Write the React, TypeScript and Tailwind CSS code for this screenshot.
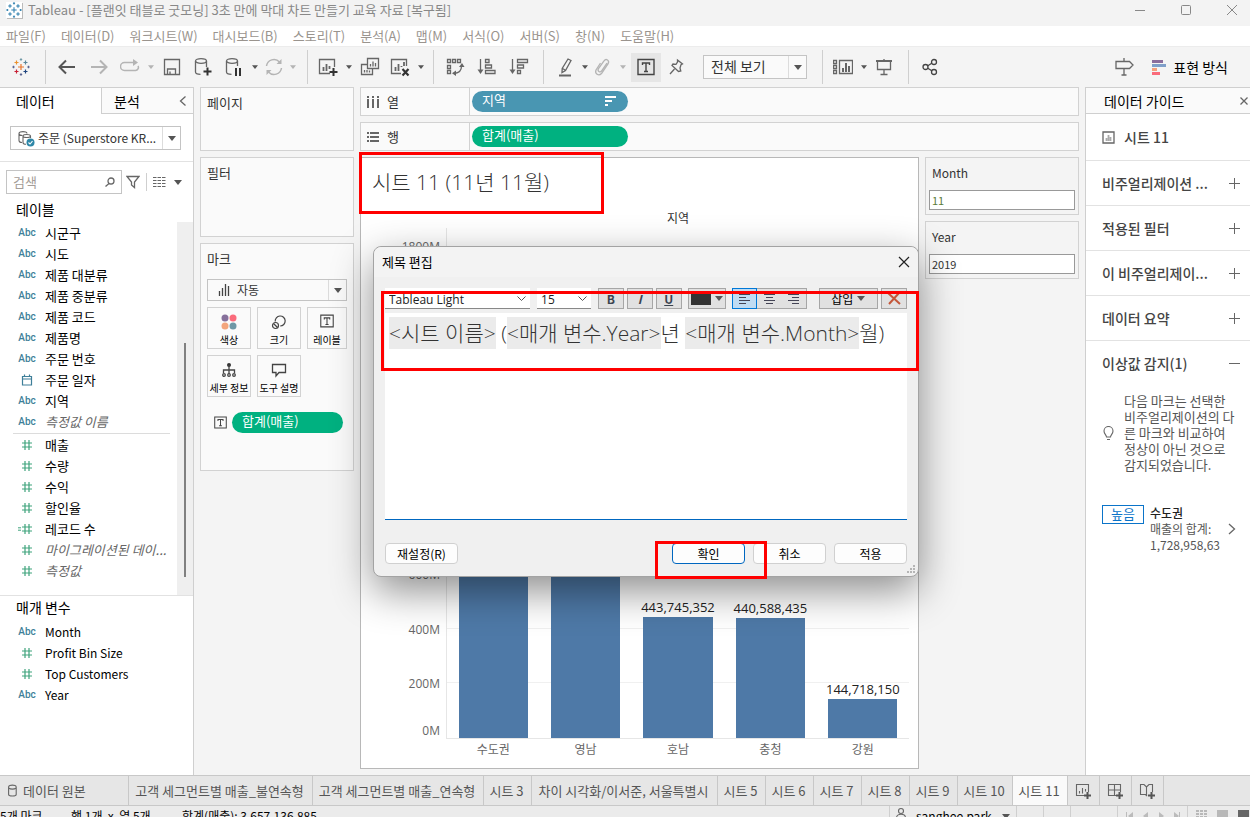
import React, { useState } from "react";

const BLUE = "#4e79a7";

/* ---------- small shared bits ---------- */

function Caret({ light = false, big = false }: { light?: boolean; big?: boolean }) {
  return (
    <svg width={big ? 8 : 6} height={big ? 5 : 4} viewBox="0 0 8 5" className="shrink-0">
      <path d="M0 0h8L4 5z" fill={light ? "#b4b4b4" : "#555"} />
    </svg>
  );
}

function Svg({
  w = 20,
  h = 20,
  color = "#666",
  sw = 1.3,
  children,
}: {
  w?: number;
  h?: number;
  color?: string;
  sw?: number;
  children: React.ReactNode;
}) {
  return (
    <svg
      width={w}
      height={h}
      viewBox={`0 0 ${w} ${h}`}
      fill="none"
      stroke={color}
      strokeWidth={sw}
      className="shrink-0"
    >
      {children}
    </svg>
  );
}

function TableauMark({ mono = false }: { mono?: boolean }) {
  const c = (color: string) => (mono ? "#2e7fae" : color);
  const cross = (x: number, y: number, r: number, color: string) => (
    <path key={`${x}-${y}`} d={`M${x - r} ${y}h${r * 2}M${x} ${y - r}v${r * 2}`} stroke={c(color)} />
  );
  return (
    <svg width={mono ? 16 : 18} height={mono ? 16 : 18} viewBox="0 0 18 18" fill="none" strokeWidth="1.2">
      {cross(9, 9, 3, "#e8762d")}
      {cross(4.5, 4.5, 2, "#eb912c")}
      {cross(13.5, 4.5, 2, "#59879b")}
      {cross(4.5, 13.5, 2, "#c72035")}
      {cross(13.5, 13.5, 2, "#1f447e")}
      {cross(9, 1.5, 1.2, "#7099a6")}
      {cross(9, 16.5, 1.2, "#5b6591")}
      {cross(1.5, 9, 1.2, "#5b6591")}
      {cross(16.5, 9, 1.2, "#5b6591")}
    </svg>
  );
}

function TextIcon({ size = 18 }: { size?: number }) {
  return (
    <svg width={size} height={size} viewBox="0 0 18 18" fill="none" stroke="#444" strokeWidth="1.4" className="shrink-0">
      <path d="M1 1.500h16v15H1zM5.500 7V5h7v2M9 5v8.500M7 13.500h4" />
    </svg>
  );
}

function ToolButton({
  label,
  className = "w-8",
  children,
}: {
  label: string;
  className?: string;
  children: React.ReactNode;
}) {
  return (
    <button aria-label={label} className={`flex h-[29px] shrink-0 items-center justify-center ${className}`}>
      {children}
    </button>
  );
}

function ToolCaret({ label, light = false }: { label: string; light?: boolean }) {
  return (
    <button aria-label={label} className="flex h-[29px] w-3 shrink-0 items-center justify-center">
      <Caret light={light} />
    </button>
  );
}

function Sep({ className = "ml-2" }: { className?: string }) {
  return <span className={`mr-[5px] h-[34px] w-px shrink-0 bg-[#cfcfcf] ${className}`} />;
}

/* ---------- window chrome ---------- */

const menus = [
  "파일(F)",
  "데이터(D)",
  "워크시트(W)",
  "대시보드(B)",
  "스토리(T)",
  "분석(A)",
  "맵(M)",
  "서식(O)",
  "서버(S)",
  "창(N)",
  "도움말(H)",
];

function TitleBar() {
  return (
    <header className="flex h-[26px] shrink-0 items-start bg-[#f3f3f3] pl-1.5">
      <span className="mt-0.5 mr-1.5 flex h-4 w-4 items-center justify-center bg-white shadow-[1px_1px_0_#bbb]">
        <TableauMark mono />
      </span>
      <h1 className="text-[13px] leading-5 text-[#888]">
        Tableau - [플랜잇 태블로 굿모닝] 3초 만에 막대 차트 만들기 교육 자료 [복구됨]
      </h1>
      <div className="ml-auto flex h-5 items-center gap-2.5">
        <button aria-label="최소화" className="flex w-9 justify-center">
          <Svg w={12} h={12} color="#888" sw={1}><path d="M1 6.500h10" /></Svg>
        </button>
        <button aria-label="최대화" className="flex w-9 justify-center">
          <Svg w={12} h={12} color="#888" sw={1}><rect x="1.500" y="1.500" width="9" height="9" rx="1" /></Svg>
        </button>
        <button aria-label="닫기" className="flex w-9 justify-center">
          <Svg w={12} h={12} color="#888" sw={1}><path d="M1 1l10 10M11 1L1 11" /></Svg>
        </button>
      </div>
    </header>
  );
}

function Toolbar() {
  return (
    <div className="flex h-[41px] shrink-0 items-center border-t border-[#ececec] bg-[#f4f4f4]">
      <ToolButton label="시작 페이지" className="w-[42px]"><TableauMark /></ToolButton>
      <Sep className="ml-[3px]" />
      <ToolButton label="실행 취소">
        <Svg color="#555" sw={2}><path d="M18 10H3M9 3.500L2.500 10 9 16.500" /></Svg>
      </ToolButton>
      <ToolButton label="다시 실행">
        <Svg color="#b4b4b4" sw={2}><path d="M2 10h15M11 3.500l6.500 6.500-6.500 6.500" /></Svg>
      </ToolButton>
      <ToolButton label="반복" className="w-[30px]">
        <Svg color="#b4b4b4" sw={1.5}>
          <path d="M14 5.500H4.500a3.500 3.500 0 0 0 0 8h11a3 3 0 0 0 2.500-4.500" />
          <path d="M13 2l5 3.500-5 3.500z" fill="#b4b4b4" stroke="none" />
        </Svg>
      </ToolButton>
      <ToolCaret label="반복 옵션" light />
      <ToolButton label="저장" className="w-[30px]">
        <Svg><path d="M2.500 2.500h15v15h-15zM5.500 17v-5h8v5M8 17v-2.500" /></Svg>
      </ToolButton>
      <ToolButton label="새 데이터 원본">
        <Svg>
          <ellipse cx="8" cy="4" rx="5.500" ry="2.300" />
          <path d="M2.500 4v11c0 1.500 2.500 2.300 5 2.300M13.500 4v6" />
          <path d="M14.500 10.500v8M10.500 14.500h8" stroke="#333" strokeWidth="2" />
        </Svg>
      </ToolButton>
      <ToolButton label="자동 업데이트 일시 중지" className="w-[30px]">
        <Svg>
          <ellipse cx="8" cy="4" rx="5.500" ry="2.300" />
          <path d="M2.500 4v11c0 1.500 2.500 2.300 5 2.300M13.500 4v5" />
          <path d="M12 11v8M16 11v8" stroke="#333" strokeWidth="2" />
        </Svg>
      </ToolButton>
      <ToolCaret label="업데이트 옵션" />
      <ToolButton label="새로 고침" className="w-[26px]">
        <Svg color="#b4b4b4" sw={1.5}>
          <path d="M2.500 9a7.500 7.500 0 0 1 13-4M17.500 11a7.500 7.500 0 0 1-13 4" />
          <path d="M17.500 2v5h-5zM2.500 18v-5h5z" fill="#b4b4b4" stroke="none" />
        </Svg>
      </ToolButton>
      <ToolCaret label="새로 고침 옵션" light />
      <Sep />
      <ToolButton label="새 워크시트" className="w-[30px]">
        <Svg>
          <path d="M12 16.500H1.500v-14h15V10" />
          <path d="M5.500 14v-4M8.500 14V7M11.500 12V9" strokeWidth="1.800" />
          <path d="M15.500 11v8M11.500 15h8" stroke="#333" strokeWidth="2" />
        </Svg>
      </ToolButton>
      <ToolCaret label="새 시트 옵션" />
      <ToolButton label="복제" className="w-[30px]">
        <Svg>
          <path d="M7.500 1.500h11v10h-11zM7 7.500H1.500v10h11V12" />
          <path d="M10.500 9.500V7M13 9.500V4.500M15.500 9.500V6M4.500 15.500V13M7 15.500V13M9.500 15.500v-2" />
        </Svg>
      </ToolButton>
      <ToolButton label="시트 지우기" className="w-[30px]">
        <Svg>
          <path d="M11 16.500H1.500v-14h15V9" />
          <path d="M5.500 14v-4M8.500 14V7M11.500 10V9M14 9V5" strokeWidth="1.800" />
          <path d="M12.500 12l6 6.500M18.500 12l-6 6.500" stroke="#333" strokeWidth="2.200" />
        </Svg>
      </ToolButton>
      <ToolCaret label="지우기 옵션" />
      <Sep className="ml-1.5" />
      <ToolButton label="행과 열 바꾸기">
        <Svg>
          <path d="M2.500 2.500h3v3h-3zM7.500 2.500h3v3h-3zM12.500 2.500h3v3h-3zM2.500 8.500h3v3h-3zM2.500 13.500h3v3h-3z" />
          <path d="M16.500 9c0 5-3 7-7 7.500" />
          <path d="M14 10l3-4 2.500 4zM11 13.500V19l-4-2.800z" fill="#666" stroke="none" />
        </Svg>
      </ToolButton>
      <ToolButton label="오름차순 정렬">
        <Svg>
          <path d="M3.500 2v13M8.500 2.500h3.500v3H8.500zM8.500 8h6v3h-6zM8.500 13.500h9.500v3H8.500z" />
          <path d="M.5 12.500h6l-3 4.500z" fill="#666" stroke="none" />
        </Svg>
      </ToolButton>
      <ToolButton label="내림차순 정렬">
        <Svg>
          <path d="M3.500 2v13M8.500 2.500h10v3h-10zM8.500 8h6v3h-6zM8.500 13.500h3v3h-3z" />
          <path d="M.5 12.500h6l-3 4.500z" fill="#666" stroke="none" />
        </Svg>
      </ToolButton>
      <Sep />
      <ToolButton label="하이라이트" className="w-[30px] pl-1">
        <Svg>
          <path d="M12 2l3 1.500-5.500 10-3.500 2 .2-4zM6.500 11.500l3 1.800" />
          <path d="M3 18.500h12" strokeWidth="2" />
        </Svg>
      </ToolButton>
      <ToolCaret label="하이라이트 옵션" />
      <ToolButton label="멤버 그룹화" className="w-[26px]">
        <Svg color="#b4b4b4">
          <path d="M13 6l-5.500 8c-1.500 2-4.500 0-3-2.500L10 4c2-3 6-.5 4 2.800l-6.500 9.700c-3 3-7 0-5.500-3.500L6.500 6" />
        </Svg>
      </ToolButton>
      <ToolCaret label="그룹 옵션" light />
      <ToolButton label="마크 레이블 표시" className="ml-0.5 w-[30px] bg-[#e6e6e6]"><TextIcon /></ToolButton>
      <ToolButton label="고정" className="w-[30px]">
        <Svg w={16} h={18}>
          <path d="M9.500 2l5 4-1.500.8-1 3.200.8 3-2.300.5L4 7.500l1-1.500 3 .3L9.500 4zM6.500 11L2 16" />
        </Svg>
      </ToolButton>
      <div className="relative ml-3 flex h-6 w-[104px] shrink-0 items-center border border-[#c4c4c4] bg-[#fafafa]">
        <select aria-label="맞춤" className="h-full w-full appearance-none bg-transparent pb-0.5 pl-[7px] text-sm text-[#333] outline-none">
          <option>전체 보기</option>
        </select>
        <span className="pointer-events-none absolute right-0 flex h-full w-[18px] items-center justify-center border-l border-[#dcdcdc]">
          <Caret big />
        </span>
      </div>
      <Sep className="ml-[15px]" />
      <ToolButton label="카드 표시/숨기기" className="w-[30px]">
        <Svg>
          <path d="M6.500 3.500h13v13h-13zM.500 3.500h3v3h-3zM.500 8.500h3v3h-3zM.500 13.500h3v3h-3z" />
          <path d="M10 15v-4M13 15V6M16 15V9" strokeWidth="2" />
        </Svg>
      </ToolButton>
      <ToolCaret label="카드 옵션" />
      <ToolButton label="프레젠테이션 모드" className="w-7">
        <Svg w={18} h={18}>
          <path d="M1 3h16" strokeWidth="2" />
          <path d="M2.500 4v7.500h13V4M9 11.500v5M5.500 16.500h7M9 1v2" />
        </Svg>
      </ToolButton>
      <Sep className="ml-2.5" />
      <ToolButton label="공유">
        <Svg w={18} h={18} color="#444">
          <circle cx="4.500" cy="9" r="2.500" />
          <circle cx="13" cy="4" r="2.500" />
          <circle cx="13" cy="14" r="2.500" />
          <path d="M6.800 7.800l4-2.500M6.800 10.200l4 2.500" />
        </Svg>
      </ToolButton>
      <ToolButton label="데이터 가이드" className="ml-auto w-8">
        <Svg>
          <path d="M2 4.500h13.500L19 8l-3.500 3.500H2zM10 1v3M10 11.500V18M7.500 18h5" />
        </Svg>
      </ToolButton>
      <button className="mr-[22px] ml-3 flex items-center text-sm text-black">
        <svg width="14" height="15" className="mr-[7px]">
          <path d="M0 0h11v3H0z" fill="#8b6d9c" />
          <path d="M0 4h14v3H0z" fill="#7f9fc9" />
          <path d="M0 8h5v3H0z" fill="#f3a07c" />
          <path d="M0 12h8v3H0z" fill="#fa6b7b" />
        </svg>
        표현 방식
      </button>
    </div>
  );
}

/* ---------- data pane ---------- */

type Field = { name: string; kind: "abc" | "date" | "num" | "calc"; generated?: boolean };

const dimensions: Field[] = [
  { name: "시군구", kind: "abc" },
  { name: "시도", kind: "abc" },
  { name: "제품 대분류", kind: "abc" },
  { name: "제품 중분류", kind: "abc" },
  { name: "제품 코드", kind: "abc" },
  { name: "제품명", kind: "abc" },
  { name: "주문 번호", kind: "abc" },
  { name: "주문 일자", kind: "date" },
  { name: "지역", kind: "abc" },
  { name: "측정값 이름", kind: "abc", generated: true },
];

const measures: Field[] = [
  { name: "매출", kind: "num" },
  { name: "수량", kind: "num" },
  { name: "수익", kind: "num" },
  { name: "할인율", kind: "num" },
  { name: "레코드 수", kind: "calc" },
  { name: "마이그레이션된 데이...", kind: "num", generated: true },
  { name: "측정값", kind: "num", generated: true },
];

const parameters: Field[] = [
  { name: "Month", kind: "abc" },
  { name: "Profit Bin Size", kind: "num" },
  { name: "Top Customers", kind: "num" },
  { name: "Year", kind: "abc" },
];

function FieldIcon({ kind }: { kind: Field["kind"] }) {
  if (kind === "abc") {
    return <span className="font-['Roboto'] text-[10px] font-medium text-[#3e7f99]">Abc</span>;
  }
  if (kind === "date") {
    return (
      <Svg w={12} h={12} color="#3e7f99" sw={1.2}>
        <path d="M1.500 2.500h9v8.500h-9zM1.500 5h9M3.500 .500v2M8.500 .500v2" />
      </Svg>
    );
  }
  return (
    <Svg w={18} h={12} color="#3fa37c" sw={1.2}>
      <path d="M4 4h10M4 8h10M7 1v10M11 1v10" />
      {kind === "calc" && <path d="M0 4.800h3M0 7.200h3" strokeWidth="1" />}
    </Svg>
  );
}

function FieldRow({ field, small = false }: { field: Field; small?: boolean }) {
  return (
    <li className="flex h-[21px] items-center">
      <span className="ml-[18px] flex w-[18px] justify-center leading-5">
        <FieldIcon kind={field.kind} />
      </span>
      <span
        className={`ml-[9px] leading-5 whitespace-nowrap ${small ? "text-xs" : "text-[13px]"} ${
          field.generated ? "text-[#666] italic" : "text-black"
        }`}
      >
        {field.name}
      </span>
    </li>
  );
}

function DataPane() {
  return (
    <aside className="flex w-[194px] shrink-0 flex-col border-t border-r border-[#cfcfcf] bg-white">
      <div className="flex h-[26px] shrink-0 text-sm text-black">
        <button className="w-[101px] pl-4 text-left">데이터</button>
        <button className="flex-1 border-b border-l border-[#cfcfcf] bg-[#fafafa] pl-3 text-left">분석</button>
        <button aria-label="접기" className="flex w-5 items-center border-b border-[#cfcfcf] bg-[#fafafa] pl-1.5">
          <Svg w={8} h={12}><path d="M6.500 1.500L1.500 6l5 4.500" /></Svg>
        </button>
      </div>
      <div className="border-b border-[#e2e2e2] px-2.5 pt-3 pb-[11px]">
        <button className="flex h-6 w-[171px] items-center border border-[#c4c4c4] text-xs text-[#333]">
          <span className="ml-1.5 mr-[3px]">
            <svg width="18" height="17" viewBox="0 0 18 17" fill="none" stroke="#666" strokeWidth="1.1">
              <path d="M10 3.500C10 1 2 1 2 3.500v7c0 1.500 1.500 2 3 2M2 3.500c0 1.500 2 2 3.500 2" />
              <path d="M13.500 6c0-2-7.500-2-7.500 0s7.500 2 7.500 0zM6 6v6.500c0 1 1.500 1.800 3 1.800M13.500 6v2" />
              <circle cx="13.500" cy="12.500" r="4" fill="#2e87a8" stroke="none" />
              <path d="M11.500 12.500l1.500 1.500 2.500-2.800" stroke="#fff" />
            </svg>
          </span>
          <span className="flex-1 text-left whitespace-nowrap">주문 (Superstore KR...</span>
          <span className="flex h-full w-[18px] items-center justify-center border-l border-[#dcdcdc]">
            <Caret big />
          </span>
        </button>
      </div>
      <div className="flex items-center px-1.5 pt-2">
        <div className="flex h-6 w-[116px] items-center border border-[#c4c4c4] pr-1.5 pl-1.5">
          <input
            aria-label="검색"
            placeholder="검색"
            className="w-0 flex-1 text-[13px] outline-none placeholder:text-[#a49d98]"
          />
          <Svg w={10} h={10}><circle cx="6" cy="4" r="3" /><path d="M4 6.500L.500 9.500" /></Svg>
        </div>
        <button aria-label="필터" className="ml-1">
          <Svg w={14} h={14}><path d="M1 1.500h12L8.500 7v5.500L5.500 10V7z" /></Svg>
        </button>
        <span className="mr-1.5 ml-1.5 h-[18px] w-px bg-[#cfcfcf]" />
        <button aria-label="보기" className="flex items-center gap-2">
          <Svg w={13} h={10} sw={1}>
            <path d="M0 .500h13M0 3.500h13M0 6.500h13M0 9.500h13" strokeDasharray="3.500 1" />
          </Svg>
          <Caret big />
        </button>
      </div>
      <h2 className="pt-[5px] pb-[3px] pl-4 text-sm leading-5 text-black">테이블</h2>
      <div className="flex h-[374px] shrink-0 border-b border-[#e2e2e2]">
        <div className="flex-1">
          <ul>
            {dimensions.map((f) => <FieldRow key={f.name} field={f} />)}
          </ul>
          <hr className="mt-px mr-[7px] ml-[13px] border-[#dcdcdc]" />
          <ul>
            {measures.map((f) => <FieldRow key={f.name} field={f} />)}
          </ul>
        </div>
        <div className="flex w-4 justify-center bg-[#efefef] pt-[121px]">
          <span className="h-[234px] w-0.5 bg-[#808080]" />
        </div>
      </div>
      <h2 className="pt-px pb-1 pl-4 text-sm leading-5 text-black">매개 변수</h2>
      <ul>
        {parameters.map((f) => <FieldRow key={f.name} field={f} small />)}
      </ul>
    </aside>
  );
}

/* ---------- shelves & marks ---------- */

const markIcons = {
  color: (
    <svg width="16" height="16">
      <circle cx="4" cy="4" r="3.500" fill="#86709b" />
      <circle cx="12" cy="4" r="3.500" fill="#fa6b7b" />
      <circle cx="4" cy="12" r="3.500" fill="#f3a57c" />
      <circle cx="12" cy="12" r="3.500" fill="#6f98a6" />
    </svg>
  ),
  size: (
    <Svg w={16} h={16} color="#444" sw={1.2}>
      <path d="M4.200 7.500a5 5 0 1 1 5 4.500" />
      <circle cx="4.500" cy="11.500" r="3" />
      <path d="M2.500 9.500l4 4" />
    </Svg>
  ),
  label: <TextIcon size={14} />,
  detail: (
    <Svg w={14} h={16} color="#444">
      <circle cx="7" cy="3" r="2" fill="#333" stroke="none" />
      <path d="M7 3v9M1.500 11V8h11v3" />
      <circle cx="2" cy="13" r="1.300" />
      <circle cx="7" cy="13" r="1.300" />
      <circle cx="12" cy="13" r="1.300" />
    </Svg>
  ),
  tooltip: (
    <Svg w={16} h={16} color="#444"><path d="M1.500 2.500h13v8H8L5 14v-3.500H1.500z" /></Svg>
  ),
};

const marks: { label: string; icon: keyof typeof markIcons }[] = [
  { label: "색상", icon: "color" },
  { label: "크기", icon: "size" },
  { label: "레이블", icon: "label" },
  { label: "세부 정보", icon: "detail" },
  { label: "도구 설명", icon: "tooltip" },
];

function Cards() {
  return (
    <div className="flex w-[154px] shrink-0 flex-col gap-1.5 text-[13px] text-[#333]">
      <section className="h-16 border border-[#d2d2d2] bg-[#fafafa] px-1.5 pt-[5px] leading-5">페이지</section>
      <section className="h-20 border border-[#d2d2d2] bg-[#fafafa] px-1.5 pt-[5px] leading-5">필터</section>
      <section className="h-[228px] border border-[#d2d2d2] bg-[#fafafa] px-1.5">
        <h2 className="pt-[5px] leading-5">마크</h2>
        <div className="relative mt-2.5 flex h-[22px] items-center border border-[#c4c4c4]">
          <span className="pointer-events-none absolute left-2.5">
            <Svg w={12} h={14} color="#444"><path d="M1.500 13V8M4.500 13V5M7.500 13V1M10.500 13V3" /></Svg>
          </span>
          <select aria-label="마크 유형" className="h-full w-full appearance-none bg-transparent pl-[29px] text-xs outline-none">
            <option>자동</option>
          </select>
          <span className="pointer-events-none absolute right-0 flex h-full w-[18px] items-center justify-center border-l border-[#dcdcdc]">
            <Caret big />
          </span>
        </div>
        <div className="mt-1.5 grid grid-cols-[44px_44px_40px] gap-1.5">
          {marks.map((m) => (
            <button
              key={m.label}
              className="flex h-[42px] flex-col items-center justify-between border border-[#d2d2d2] pt-1.5 text-[10px] leading-4 whitespace-nowrap text-black"
            >
              {markIcons[m.icon]}
              {m.label}
            </button>
          ))}
        </div>
        <div className="mt-[15px] flex items-center gap-[5px] pl-[7px]">
          <TextIcon size={13} />
          <span className="h-[21px] w-[111px] rounded-full bg-[#00b180] pl-2.5 leading-[18px] text-white">합계(매출)</span>
        </div>
      </section>
    </div>
  );
}

function Shelf({ name, icon, children }: { name: string; icon: React.ReactNode; children: React.ReactNode }) {
  return (
    <div className="flex h-[29px] shrink-0 items-center border border-[#d2d2d2] bg-[#fafafa] text-[13px]">
      <div className="flex h-full w-[109px] items-center gap-2 border-r border-[#d2d2d2] pl-1.5 text-[#333]">
        {icon}
        {name}
      </div>
      {children}
    </div>
  );
}

/* ---------- worksheet view ---------- */

const AXIS_MAX = 1868;
const ticks = [1800, 600, 400, 200];

const regions = [
  { name: "수도권", value: 1728.9 },
  { name: "영남", value: 899.1 },
  { name: "호남", value: 443.7, label: "443,745,352" },
  { name: "충청", value: 440.6, label: "440,588,435" },
  { name: "강원", value: 144.7, label: "144,718,150" },
];

function Chart() {
  return (
    <div className="flex flex-1 flex-col pr-[9px] pb-[29px] text-[#666]">
      <div className="flex flex-1">
        <div className="relative w-[86px] border-r border-[#e6e6e6] font-['Open_Sans'] text-xs">
          {ticks.map((t) => (
            <span
              key={t}
              className="absolute right-1.5 translate-y-1/2 leading-4"
              style={{ bottom: `${(t / AXIS_MAX) * 100}%` }}
            >
              {t}M
            </span>
          ))}
          <span className="absolute right-1.5 bottom-0 leading-4">0M</span>
        </div>
        <div className="relative grid flex-1 grid-cols-5 border-b border-[#e6e6e6]">
          {ticks.map((t) => (
            <span
              key={t}
              className="absolute inset-x-0 h-px bg-[#f0f0f0]"
              style={{ bottom: `${(t / AXIS_MAX) * 100}%` }}
            />
          ))}
          {regions.map((r) => (
            <div key={r.name} className="relative flex flex-col items-center justify-end">
              <span className="font-['Open_Sans'] text-[13px] leading-5 text-[#222]">{r.label}</span>
              <span
                className="w-3/4"
                style={{ height: `${(r.value / AXIS_MAX) * 100}%`, backgroundColor: BLUE }}
              />
            </div>
          ))}
        </div>
      </div>
      <div className="-mb-5 grid grid-cols-5 pl-[86px] text-center text-xs leading-5">
        {regions.map((r) => <span key={r.name}>{r.name}</span>)}
      </div>
    </div>
  );
}

/* ---------- edit title dialog ---------- */

function Token({ children }: { children: React.ReactNode }) {
  return <span className="inline-block h-8 bg-[#ebebeb]">{children}</span>;
}

const fmtButton = "flex h-[21px] items-center justify-center border border-[#a6a6a6] bg-[#e1e1e1] text-xs text-[#3b4450]";
const dlgButton = "h-[21px] w-[73px] rounded border bg-[#fdfdfd] text-xs leading-4 text-black";
const dlgSelect = "block h-5 w-full appearance-none bg-transparent pt-1 pl-1 font-['Open_Sans'] text-xs leading-4 text-[#222] outline-none";

function ComboCaret() {
  return (
    <span className="pointer-events-none absolute top-2 right-1 flex">
      <Svg w={9} h={6} color="#555" sw={1}><path d="M.500 .500l4 4 4-4" /></Svg>
    </span>
  );
}

function EditTitleDialog() {
  const [align, setAlign] = useState("left");
  const alignLines: Record<string, string> = {
    left: "M1 1.500h11M1 4.500h7M1 7.500h11M1 10.500h7",
    center: "M1 1.500h11M3 4.500h7M1 7.500h11M3 10.500h7",
    right: "M1 1.500h11M5 4.500h7M1 7.500h11M5 10.500h7",
  };

  return (
    <div
      role="dialog"
      aria-label="제목 편집"
      className="absolute top-[88px] left-3 flex h-[331px] w-[546px] flex-col rounded-lg border border-[#a3a3a3] bg-[#f0f0f0] shadow-[0_14px_40px_rgba(0,0,0,0.45)]"
    >
      <div className="flex h-[30px] shrink-0 items-center justify-between rounded-t-lg bg-[#f3f3f3] pr-2 pl-2 text-[13px] text-black">
        <h2>제목 편집</h2>
        <button aria-label="대화 상자 닫기">
          <Svg w={12} h={12} color="#222" sw={1.2}><path d="M1 1l10 10M11 1L1 11" /></Svg>
        </button>
      </div>

      <div className="flex px-[11px] pt-[11px]">
        <div className="relative h-[21px] w-[146px] border-b border-[#888] bg-white">
          <select aria-label="글꼴" className={dlgSelect}>
            <option>Tableau Light</option>
          </select>
          <ComboCaret />
        </div>
        <div className="relative ml-[7px] h-[21px] w-[54px] border-b border-[#888] bg-white">
          <select aria-label="글꼴 크기" className={dlgSelect}>
            <option>15</option>
          </select>
          <ComboCaret />
        </div>
        <div className="ml-[7px] flex gap-[3px]">
          <button className={`${fmtButton} w-[26px] font-bold`}>B</button>
          <button className={`${fmtButton} w-[26px] font-bold italic`}>I</button>
          <button className={`${fmtButton} w-[26px] font-bold underline`}>U</button>
        </div>
        <button aria-label="글꼴 색" className={`${fmtButton} ml-1.5 w-[38px] gap-1`}>
          <span className="h-3 w-5 bg-[#333]" />
          <Caret big />
        </button>
        <div className="ml-1.5 flex">
          {["left", "center", "right"].map((a) => (
            <button
              key={a}
              aria-label={a}
              onClick={() => setAlign(a)}
              className={`flex h-[21px] w-[25px] items-center justify-center border-y ${
                align === a
                  ? "border-x border-[#0078d7] bg-[#c0dcf3]"
                  : "border-[#a6a6a6] bg-[#e1e1e1] last:border-r"
              }`}
            >
              <Svg w={13} h={12} color="#445" sw={1}><path d={alignLines[a]} /></Svg>
            </button>
          ))}
        </div>
        <button className={`${fmtButton} ml-3 w-[60px] gap-1 text-black`}>
          삽입
          <Caret big />
        </button>
        <button aria-label="서식 지우기" className={`${fmtButton} ml-[3px] w-[26px]`}>
          <Svg w={14} h={13} color="#c4573a" sw={2}><path d="M1 1l12 11M12 1L2 12" /></Svg>
        </button>
      </div>

      <div
        role="textbox"
        aria-label="제목"
        contentEditable
        suppressContentEditableWarning
        className="mx-[11px] mt-1 h-[207px] border-b border-b-[#0067c0] bg-white px-1 pt-1 font-['Open_Sans','Noto_Sans_CJK_KR',sans-serif] text-[21px] leading-8 font-light whitespace-nowrap text-[#333] outline-none"
      >
        <Token>&lt;시트 이름&gt;</Token> (<Token>&lt;매개 변수.Year&gt;</Token>년 <Token>&lt;매개 변수.Month&gt;</Token>월)
      </div>

      <div className="flex gap-2 px-[11px] pt-[23px]">
        <button className={`${dlgButton} mr-auto border-[#d0d0d0]`}>재설정(R)</button>
        <button className={`${dlgButton} border-[#0067c0]`}>확인</button>
        <button className={`${dlgButton} border-[#d0d0d0]`}>취소</button>
        <button className={`${dlgButton} border-[#d0d0d0]`}>적용</button>
      </div>

      <span className="absolute right-0.5 bottom-0.5">
        <svg width="9" height="9" fill="#b5b5b5">
          <path d="M6 0h2v2H6zM3 3h2v2H3zM6 3h2v2H6zM0 6h2v2H0zM3 6h2v2H3zM6 6h2v2H6z" />
        </svg>
      </span>

      {/* highlight frames */}
      <span className="pointer-events-none absolute top-11 left-[7px] h-20 w-[538px] border-[3px] border-[#ff0000]" />
      <span className="pointer-events-none absolute top-[294px] left-[281px] h-[38px] w-28 border-[3px] border-[#ff0000]" />
    </div>
  );
}

function ParamCard({ name, value, valueClass }: { name: string; value: string; valueClass: string }) {
  const id = `param-${name}`;
  return (
    <div className="border border-[#d2d2d2] px-[3px] pt-[5px] pb-1">
      <label htmlFor={id} className="block pb-[7px] pl-[3px] text-xs leading-5 text-[#333]">{name}</label>
      <input
        id={id}
        defaultValue={value}
        className={`block h-5 w-full border border-[#999] bg-white px-0.5 text-[11px] outline-none ${valueClass}`}
      />
    </div>
  );
}

function Worksheet() {
  return (
    <main className="flex min-w-0 flex-1 flex-col gap-1.5 pb-1.5">
      <Shelf
        name="열"
        icon={
          <svg width="12" height="12" fill="#666">
            <path d="M0 0h2v2H0zM5 0h2v2H5zM10 0h2v2h-2zM0 3h2v9H0zM5 3h2v9H5zM10 3h2v9h-2z" />
          </svg>
        }
      >
        <span className="ml-0.5 flex h-[21px] w-[156px] justify-between rounded-full bg-[#4996b2] pr-3 pl-2.5 leading-[18px] text-white">
          지역
          <svg width="11" height="10" fill="#fff" className="mt-[5px]">
            <path d="M0 0h11v2H0zM0 4h7v2H0zM0 8h3v2H0z" />
          </svg>
        </span>
      </Shelf>
      <Shelf
        name="행"
        icon={
          <svg width="12" height="10" fill="#666">
            <path d="M0 0h2v2H0zM0 4h2v2H0zM0 8h2v2H0zM3 0h9v2H3zM3 4h9v2H3zM3 8h9v2H3z" />
          </svg>
        }
      >
        <span className="ml-0.5 h-[21px] w-[156px] rounded-full bg-[#00b180] pl-2.5 leading-[18px] text-white">합계(매출)</span>
      </Shelf>
      <div className="flex flex-1 gap-1.5">
        <section className="relative flex min-w-0 flex-1 flex-col border border-[#b8b8b8] bg-white">
          <h2 className="pt-2 pl-[11px] font-['Open_Sans','Noto_Sans_CJK_KR',sans-serif] text-[21px] leading-8 font-light text-[#333]">
            시트 11 (11년 11월)
          </h2>
          <p className="mt-2.5 pl-[77px] text-center text-xs leading-5 text-[#333]">지역</p>
          <Chart />
          <span className="pointer-events-none absolute -top-1.5 -left-0.5 h-[62px] w-[245px] border-[3px] border-[#ff0000]" />
          <EditTitleDialog />
        </section>
        <div className="flex w-[154px] shrink-0 flex-col gap-1.5">
          <ParamCard name="Month" value="11" valueClass="text-[#5b7a3a]" />
          <ParamCard name="Year" value="2019" valueClass="text-[#333]" />
        </div>
      </div>
    </main>
  );
}

/* ---------- data guide ---------- */

function GuideRow({ title, open = false }: { title: string; open?: boolean }) {
  return (
    <button
      aria-expanded={open}
      className="flex h-[45px] w-full items-center justify-between border-t border-[#e2e2e2] pr-2.5 pl-4 text-sm font-medium text-[#444]"
    >
      {title}
      <Svg w={11} h={11} sw={1}><path d={open ? "M0 5.500h11" : "M0 5.500h11M5.500 0v11"} /></Svg>
    </button>
  );
}

function DataGuide() {
  return (
    <aside className="flex w-[165px] shrink-0 flex-col border-t border-l border-[#cfcfcf] bg-white">
      <div className="flex h-[26px] items-center justify-between border-b border-[#cfcfcf] bg-[#fafafa] pr-0.5 pl-[18px] text-sm text-black">
        <h2>데이터 가이드</h2>
        <button aria-label="가이드 닫기">
          <Svg w={8} h={8}><path d="M.500 .500l7 7M7.500 .500l-7 7" /></Svg>
        </button>
      </div>
      <div className="flex h-[46px] items-center gap-[9px] pl-4 text-sm font-medium text-[#444]">
        <Svg w={13} h={13}>
          <path d="M1 1h11v11H1z" />
          <path d="M4.500 10V7M6.500 10V4M8.500 10V6" strokeWidth="1.800" stroke="#aaa" />
        </Svg>
        시트 11
      </div>
      <GuideRow title="비주얼리제이션 ..." />
      <GuideRow title="적용된 필터" />
      <GuideRow title="이 비주얼리제이..." />
      <GuideRow title="데이터 요약" />
      <GuideRow title="이상값 감지(1)" open />
      <div className="flex items-center gap-2.5 pt-2 pl-[17px]">
        <Svg w={11} h={15} sw={1.1}>
          <path d="M3.500 11C3.500 9 1 8 1 5a4.500 4.500 0 0 1 9 0c0 3-2.500 4-2.500 6zM4 13.500h3" />
        </Svg>
        <p className="text-[13px] leading-4 whitespace-nowrap text-[#555]">
          다음 마크는 선택한<br />비주얼리제이션의 다<br />른 마크와 비교하여<br />정상이 아닌 것으로<br />감지되었습니다.
        </p>
      </div>
      <button className="mt-8 flex items-center pr-3 pl-4 text-left text-[#555]">
        <span className="mr-1.5 h-[19px] w-[42px] shrink-0 self-start border border-[#0b74c9] text-center text-[13px] leading-4 text-[#0b74c9]">
          높음
        </span>
        <span className="w-[70px] text-xs leading-4 whitespace-nowrap">
          <b className="font-medium text-[#222]">수도권</b><br />매출의 합계:<br />1,728,958,63
        </span>
        <span className="ml-2"><Svg w={8} h={12}><path d="M1 1l5.500 5L1 11" /></Svg></span>
      </button>
    </aside>
  );
}

/* ---------- sheet tabs & status ---------- */

const sheets = [
  { name: "고객 세그먼트별 매출_불연속형", width: "w-[184px]" },
  { name: "고객 세그먼트별 매출_연속형", width: "w-[171px]" },
  { name: "시트 3", width: "w-12" },
  { name: "차이 시각화/이서준, 서울특별시", width: "w-[186px]" },
  { name: "시트 5", width: "w-12" },
  { name: "시트 6", width: "w-12" },
  { name: "시트 7", width: "w-12" },
  { name: "시트 8", width: "w-12" },
  { name: "시트 9", width: "w-12" },
  { name: "시트 10", width: "w-[55px]" },
  { name: "시트 11", width: "w-[55px]" },
];

const newTabIcons = [
  { label: "새 워크시트 탭", d: "M9 12.500H1.500v-11h12V9M4.500 10.500V8M7.500 10.500V5M10.500 8.500V6" },
  { label: "새 대시보드 탭", d: "M9 12.500H1.500v-11h12V9M1.500 7h12M7.500 1.500v11" },
  { label: "새 스토리 탭", d: "M8 13l-1.500-1.500H1.500V1.500H5L7.500 4 10 1.500h3.500V9M7.500 4v8" },
];

function SheetTabs() {
  return (
    <nav className="flex h-[31px] shrink-0 border-y border-[#c8c8c8] bg-[#e6e6e6] text-[13px] text-[#555]">
      <button className="flex w-[129px] shrink-0 items-center border-r border-[#c8c8c8] pl-2">
        <Svg w={9} h={13} sw={1.1}>
          <path d="M.600 3v7.500c0 2 7.600 2 7.600 0V3c0-2.500-7.600-2.500-7.600 0zM.600 4c2 1.500 5.600 1.500 7.600 0" />
        </Svg>
        <span className="ml-1.5">데이터 원본</span>
      </button>
      {sheets.map((s) => (
        <button
          key={s.name}
          className={`shrink-0 border-r border-[#c8c8c8] pr-0.5 text-center whitespace-nowrap ${s.width} ${
            s.name === "시트 11" ? "bg-[#fafafa]" : ""
          }`}
        >
          {s.name}
        </button>
      ))}
      {newTabIcons.map((i) => (
        <button key={i.label} aria-label={i.label} className="flex w-8 shrink-0 items-center justify-center border-r border-[#c8c8c8]">
          <Svg w={17} h={16} sw={1.1}>
            <path d={i.d} />
            <path d="M12.500 9v7M9 12.500h7" stroke="#555" strokeWidth="2" />
          </Svg>
        </button>
      ))}
    </nav>
  );
}

function StatusBar() {
  return (
    <footer className="flex h-[11px] shrink-0 overflow-hidden bg-[#ebebeb] text-xs leading-5 text-black">
      <span className="w-[71px] shrink-0">5개 마크</span>
      <span className="w-[111px] shrink-0">행 1개&nbsp; x&nbsp; 열 5개</span>
      <span>합계(매출): 3,657,136,885</span>
      <div className="ml-auto flex h-5 shrink-0">
        <div className="flex w-[127px] items-start border-l border-[#cfcfcf] pl-1.5">
          <Svg w={10} h={12} sw={1.1}><circle cx="5" cy="5" r="2.500" /><path d="M.500 12c0-5 9-5 9 0" /></Svg>
          <span className="ml-2.5">sanghee.park</span>
          <span className="mt-2 mr-1.5 ml-auto flex"><Caret big /></span>
        </div>
        <span className="w-[27px] border-l border-[#cfcfcf]" />
        <span className="w-[27px] border-l border-[#cfcfcf]" />
        <span className="w-[47px] border-l border-[#cfcfcf]" />
        <div className="flex w-[70px] border-l border-[#cfcfcf] pt-1.5 pl-2">
          <svg width="54" height="8" fill="#bbb">
            <path d="M0 0h1v8H0zM7 0v8L2 4zM22 0v8l-5-4zM33 0v8l5-4zM48 0v8l5-4zM53 0h1v8h-1z" />
          </svg>
        </div>
        <div className="flex w-[63px] border-l border-[#cfcfcf] pt-1 pl-2">
          <svg width="54" height="10" fill="#b8b8b8">
            <path d="M0 0h3v2H0zM4 0h3v2H4zM8 0h3v2H8zM0 3h3v2H0zM4 3h3v2H4zM8 3h3v2H8zM0 6h3v2H0zM4 6h3v2H4zM8 6h3v2H8zM21 0h11v10H21z" />
            <path d="M42 0h11v10H42z" fill="#666" />
          </svg>
        </div>
      </div>
    </footer>
  );
}

export default function App() {
  return (
    <div className="flex h-screen flex-col overflow-hidden bg-[#f4f4f4] font-['Noto_Sans_CJK_KR',sans-serif]">
      <TitleBar />
      <nav className="flex h-5 shrink-0 items-center gap-[15px] bg-white pl-1.5 text-[13px] leading-5 text-[#9a948e]">
        {menus.map((m) => <button key={m}>{m}</button>)}
      </nav>
      <Toolbar />
      <div className="flex min-h-0 flex-1 gap-1.5">
        <DataPane />
        <Cards />
        <Worksheet />
        <DataGuide />
      </div>
      <SheetTabs />
      <StatusBar />
    </div>
  );
}
